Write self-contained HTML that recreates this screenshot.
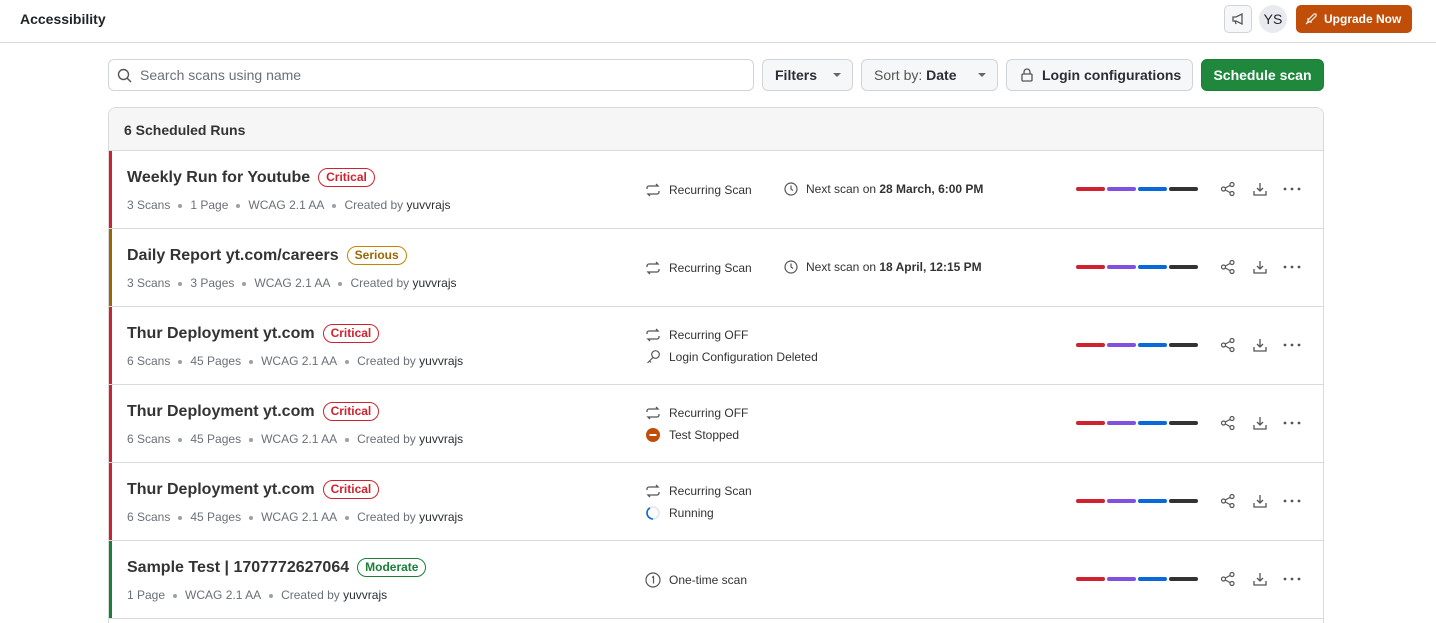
<!DOCTYPE html>
<html style="height:623px;overflow:hidden"><head><meta charset="utf-8"><style>
*{box-sizing:border-box;margin:0;padding:0}
body{width:1436px;height:623px;overflow:hidden;background:#fff;font-family:"Liberation Sans",sans-serif;color:#1f2328;position:relative}
.a{position:absolute}
.top{top:0;left:0;width:1436px;height:43px;border-bottom:1px solid #d8dadd}
.btn{position:absolute;top:59px;height:32px;border:1px solid #d0d4d9;border-radius:6px;background:#f6f7f8;font-size:14px;font-weight:bold;display:flex;align-items:center;color:#2b2f33}
.card{left:108px;top:107px;width:1216px;height:516px;border:1px solid #d8dadd;border-bottom:none;border-radius:8px 8px 0 0;overflow:hidden}
.head{left:0;top:0;width:1216px;height:43px;background:#f6f6f6;border-bottom:1px solid #d8dadd;font-size:14px;font-weight:bold;padding:14px 15px;color:#333}
.row{left:0;width:1216px;height:78px;border-bottom:1px solid #d8dadd}
.acc{left:0;top:0;width:3px;height:77px}
.title{left:18px;top:17px;font-size:16px;font-weight:bold;color:#333;white-space:nowrap;display:flex;align-items:center}
.badge{margin-left:8px;font-size:12px;font-weight:bold;border:1px solid;border-radius:10px;padding:1px 7px;line-height:15px}
.meta{left:18px;top:47px;font-size:12px;color:#6a7078;white-space:nowrap}
.meta b{font-weight:normal;color:#2b2f33}
.dot{display:inline-block;width:4px;height:4px;border-radius:2px;background:#9aa0a8;margin:0 8px;vertical-align:middle}
.st{font-size:12px;color:#333;display:flex;align-items:center;white-space:nowrap}
.st svg{margin-right:8px}
</style></head><body>
<div class="a top"></div>
<div class="a" style="left:20px;top:11px;font-size:14px;font-weight:bold">Accessibility</div>
<div class="a" style="left:1224px;top:5px;width:28px;height:28px;border:1px solid #d0d4d9;border-radius:5px;background:#f6f7f8"><svg width="26" height="26" viewBox="0 0 26 26"><path d="M8 11h3l6-3v10l-6-3H8z M10 15l1 3" fill="none" stroke="#555" stroke-width="1.3"/></svg></div>
<div class="a" style="left:1259px;top:5px;width:28px;height:28px;border-radius:14px;background:#e8eaf0;font-size:14px;text-align:center;line-height:28px">YS</div>
<div class="a" style="left:1296px;top:5px;width:116px;height:28px;border-radius:5px;background:#c04d08;color:#fff;font-size:12px;font-weight:bold;line-height:28px;padding-left:28px">Upgrade Now<svg class="a" style="left:8px;top:7px" width="14" height="14" viewBox="0 0 14 14"><path d="M3 11l2-4 5-5h2v2l-5 5zM3 7l2 0M7 11v-2M2 12l2-2" fill="none" stroke="#fff" stroke-width="1.1"/></svg></div>

<div class="a" style="left:108px;top:59px;width:646px;height:32px;border:1px solid #d0d4d9;border-radius:6px;font-size:14px;color:#6a7078;padding:7px 0 0 31px">Search scans using name<svg class="a" style="left:8px;top:8px" width="16" height="16" viewBox="0 0 16 16"><circle cx="6.5" cy="6.5" r="5" fill="none" stroke="#555" stroke-width="1.4"/><path d="M10 10l4 4" stroke="#555" stroke-width="1.4"/></svg></div>
<div class="btn" style="left:762px;width:91px;padding-left:12px">Filters<span class="a" style="left:70px;top:13px;border:4px solid transparent;border-top-color:#666"></span></div>
<div class="btn" style="left:861px;width:137px;padding-left:12px"><span style="font-weight:normal;color:#555">Sort by:&nbsp;</span>Date<span class="a" style="left:116px;top:13px;border:4px solid transparent;border-top-color:#666"></span></div>
<div class="btn" style="left:1006px;width:187px;padding-left:35px">Login configurations<svg class="a" style="left:12px;top:7px" width="16" height="16" viewBox="0 0 16 16"><rect x="3" y="7" width="10" height="7" rx="1" fill="none" stroke="#555" stroke-width="1.3"/><path d="M5 7V5a3 3 0 016 0v2" fill="none" stroke="#555" stroke-width="1.3"/></svg></div>
<div class="btn" style="left:1201px;width:123px;background:#1f883d;border-color:#1a7f37;color:#fff;justify-content:center">Schedule scan</div>

<div class="a card">
<div class="a head">6 Scheduled Runs</div>

<div class="a row" style="top:43px"><div class="a acc" style="background:#cf222e"></div>
<div class="a title">Weekly Run for Youtube<span class="badge" style="color:#cf222e;border-color:#cf222e">Critical</span></div>
<div class="a meta">3 Scans<span class="dot"></span>1 Page<span class="dot"></span>WCAG 2.1 AA<span class="dot"></span>Created by <b>yuvvrajs</b></div>
<div class="a st" style="left:536px;top:31px"><svg width="16" height="16" viewBox="0 0 16 16"><path d="M2 7V6a2 2 0 012-2h9l-2-2M14 9v1a2 2 0 01-2 2H3l2 2" fill="none" stroke="#555" stroke-width="1.3"/></svg>Recurring Scan</div>
<div class="a st" style="left:675px;top:31px"><svg width="14" height="14" viewBox="0 0 14 14"><circle cx="7" cy="7" r="6" fill="none" stroke="#555" stroke-width="1.2"/><path d="M7 3.5V7l2 1.5" fill="none" stroke="#555" stroke-width="1.2"/></svg>Next scan on&nbsp;<b>28 March, 6:00 PM</b></div>
</div>

<div class="a row" style="top:121px"><div class="a acc" style="background:#9a6700"></div>
<div class="a title">Daily Report yt.com/careers<span class="badge" style="color:#9a6700;border-color:#bf8700">Serious</span></div>
<div class="a meta">3 Scans<span class="dot"></span>3 Pages<span class="dot"></span>WCAG 2.1 AA<span class="dot"></span>Created by <b>yuvvrajs</b></div>
<div class="a st" style="left:536px;top:31px"><svg width="16" height="16" viewBox="0 0 16 16"><path d="M2 7V6a2 2 0 012-2h9l-2-2M14 9v1a2 2 0 01-2 2H3l2 2" fill="none" stroke="#555" stroke-width="1.3"/></svg>Recurring Scan</div>
<div class="a st" style="left:675px;top:31px"><svg width="14" height="14" viewBox="0 0 14 14"><circle cx="7" cy="7" r="6" fill="none" stroke="#555" stroke-width="1.2"/><path d="M7 3.5V7l2 1.5" fill="none" stroke="#555" stroke-width="1.2"/></svg>Next scan on&nbsp;<b>18 April, 12:15 PM</b></div>
</div>

<div class="a row" style="top:199px"><div class="a acc" style="background:#cf222e"></div>
<div class="a title">Thur Deployment yt.com<span class="badge" style="color:#cf222e;border-color:#cf222e">Critical</span></div>
<div class="a meta">6 Scans<span class="dot"></span>45 Pages<span class="dot"></span>WCAG 2.1 AA<span class="dot"></span>Created by <b>yuvvrajs</b></div>
<div class="a st" style="left:536px;top:20px"><svg width="16" height="16" viewBox="0 0 16 16"><path d="M2 7V6a2 2 0 012-2h9l-2-2M14 9v1a2 2 0 01-2 2H3l2 2" fill="none" stroke="#555" stroke-width="1.3"/></svg>Recurring OFF</div>
<div class="a st" style="left:536px;top:42px"><svg width="16" height="16" viewBox="0 0 16 16"><circle cx="10.5" cy="5.5" r="3.8" fill="none" stroke="#555" stroke-width="1.2"/><path d="M8 8.5l-5.5 5.5M4.5 12l1.5 1.5" fill="none" stroke="#555" stroke-width="1.2"/></svg>Login Configuration Deleted</div>
</div>

<div class="a row" style="top:277px"><div class="a acc" style="background:#cf222e"></div>
<div class="a title">Thur Deployment yt.com<span class="badge" style="color:#cf222e;border-color:#cf222e">Critical</span></div>
<div class="a meta">6 Scans<span class="dot"></span>45 Pages<span class="dot"></span>WCAG 2.1 AA<span class="dot"></span>Created by <b>yuvvrajs</b></div>
<div class="a st" style="left:536px;top:20px"><svg width="16" height="16" viewBox="0 0 16 16"><path d="M2 7V6a2 2 0 012-2h9l-2-2M14 9v1a2 2 0 01-2 2H3l2 2" fill="none" stroke="#555" stroke-width="1.3"/></svg>Recurring OFF</div>
<div class="a st" style="left:536px;top:42px"><svg width="16" height="16" viewBox="0 0 16 16"><circle cx="8" cy="8" r="7" fill="#c04d08"/><rect x="4.5" y="7" width="7" height="2" fill="#fff"/></svg>Test Stopped</div>
</div>

<div class="a row" style="top:355px"><div class="a acc" style="background:#cf222e"></div>
<div class="a title">Thur Deployment yt.com<span class="badge" style="color:#cf222e;border-color:#cf222e">Critical</span></div>
<div class="a meta">6 Scans<span class="dot"></span>45 Pages<span class="dot"></span>WCAG 2.1 AA<span class="dot"></span>Created by <b>yuvvrajs</b></div>
<div class="a st" style="left:536px;top:20px"><svg width="16" height="16" viewBox="0 0 16 16"><path d="M2 7V6a2 2 0 012-2h9l-2-2M14 9v1a2 2 0 01-2 2H3l2 2" fill="none" stroke="#555" stroke-width="1.3"/></svg>Recurring Scan</div>
<div class="a st" style="left:536px;top:42px"><svg width="16" height="16" viewBox="0 0 16 16" style="margin-right:8px"><circle cx="8" cy="8" r="6" fill="none" stroke="#dbe7f7" stroke-width="1.6"/><path d="M8 14A6 6 0 012 8a6 6 0 013-5.2" fill="none" stroke="#0969da" stroke-width="1.6"/></svg>Running</div>
</div>

<div class="a row" style="top:433px"><div class="a acc" style="background:#1a7f37"></div>
<div class="a title">Sample Test | 1707772627064<span class="badge" style="color:#1a7f37;border-color:#1a7f37">Moderate</span></div>
<div class="a meta">1 Page<span class="dot"></span>WCAG 2.1 AA<span class="dot"></span>Created by <b>yuvvrajs</b></div>
<div class="a st" style="left:536px;top:31px"><svg width="16" height="16" viewBox="0 0 16 16"><circle cx="8" cy="8" r="7" fill="none" stroke="#555" stroke-width="1.2"/><path d="M7 5.5l1.5-1v7" fill="none" stroke="#555" stroke-width="1.2"/></svg>One-time scan</div>
</div>
</div>

<div id="rowextras"></div>
<script>
var h='';for(var i=0;i<6;i++){var t=151+78*i;
h+='<div class="a" style="left:1076px;top:'+(t+36)+'px;display:flex;gap:2px"><i style="display:block;width:29px;height:4px;border-radius:2px;background:#cf222e"></i><i style="display:block;width:29px;height:4px;border-radius:2px;background:#8250df"></i><i style="display:block;width:29px;height:4px;border-radius:2px;background:#0969da"></i><i style="display:block;width:29px;height:4px;border-radius:2px;background:#333"></i></div>';
h+='<svg class="a" style="left:1220px;top:'+(t+30)+'px" width="16" height="16" viewBox="0 0 16 16"><circle cx="12" cy="3.5" r="2" fill="none" stroke="#555" stroke-width="1.2"/><circle cx="12" cy="12.5" r="2" fill="none" stroke="#555" stroke-width="1.2"/><circle cx="3.5" cy="8" r="2" fill="none" stroke="#555" stroke-width="1.2"/><path d="M5.3 7l4.9-2.6M5.3 9l4.9 2.6" stroke="#555" stroke-width="1.2"/></svg>';
h+='<svg class="a" style="left:1252px;top:'+(t+30)+'px" width="16" height="16" viewBox="0 0 16 16"><path d="M8 2v8M5 7l3 3 3-3M2 10v4h12v-4" fill="none" stroke="#555" stroke-width="1.3"/></svg>';
h+='<svg class="a" style="left:1283px;top:'+(t+30)+'px" width="18" height="16" viewBox="0 0 18 16"><circle cx="2" cy="8" r="1.4" fill="#555"/><circle cx="9" cy="8" r="1.4" fill="#555"/><circle cx="16" cy="8" r="1.4" fill="#555"/></svg>';}
document.getElementById('rowextras').innerHTML=h;
</script>
</body></html>
